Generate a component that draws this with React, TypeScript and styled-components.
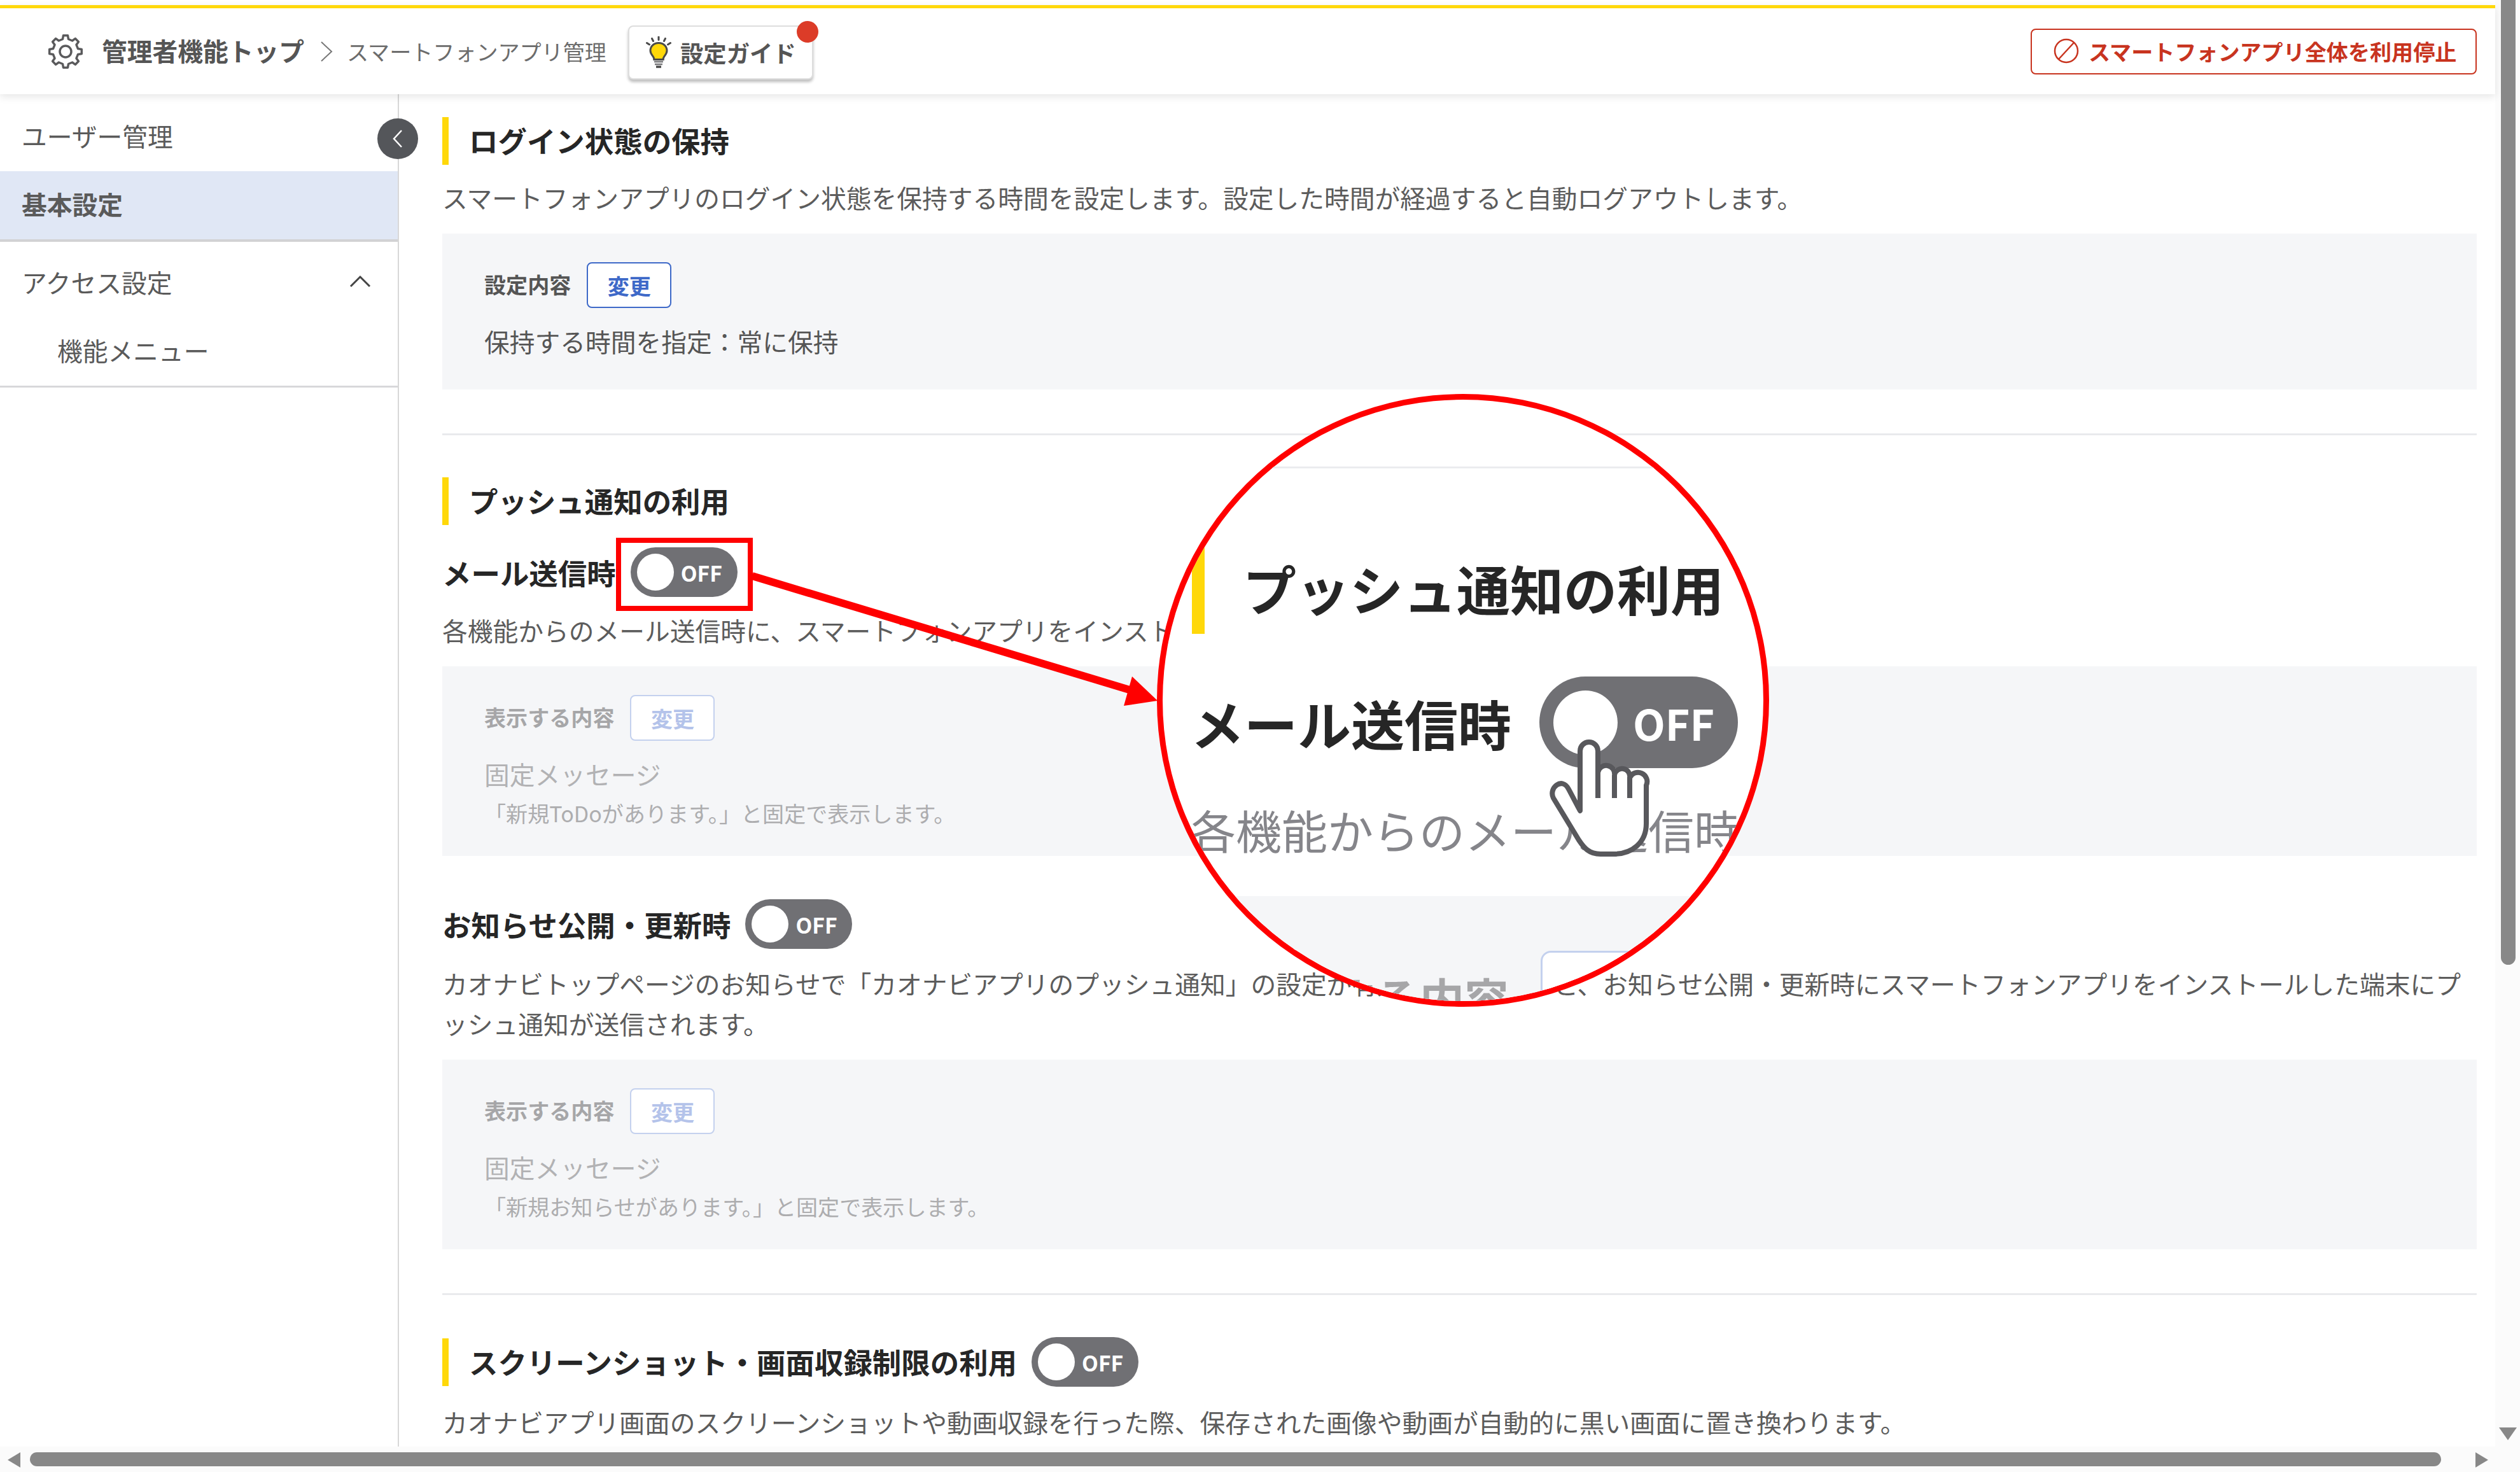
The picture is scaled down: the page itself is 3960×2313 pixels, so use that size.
import React from "react";
import styled, { createGlobalStyle } from "styled-components";

const GlobalStyle = createGlobalStyle`
  html, body {
    margin: 0;
    padding: 0;
    background: #ffffff;
  }
  body {
    width: 3960px;
    height: 2313px;
    overflow: hidden;
    font-family: "Noto Sans CJK JP", "Noto Sans", sans-serif;
    color: #555555;
  }
  * {
    box-sizing: border-box;
  }
`;

const Stage = styled.div`
  position: relative;
  display: flex;
  width: 3960px;
  height: 2313px;
  overflow: hidden;
`;

const Page = styled.div`
  display: flex;
  flex-direction: column;
  width: 3921px;
  height: 100%;
`;

const Header = styled.header`
  position: relative;
  z-index: 3;
  display: flex;
  align-items: center;
  flex: none;
  height: 140px;
  margin-top: 8px;
  padding: 0 29px 0 75px;
  background: #ffffff;
  border-top: 5px solid #ffd80a;
  box-shadow: 0 4px 12px rgba(0, 0, 0, 0.1);
`;

const HeaderTitle = styled.span`
  margin: 0 0 4px 29px;
  font-size: 39.76px;
  font-weight: 700;
  color: #555555;
`;

const Crumb = styled.span`
  margin-bottom: 2px;
  font-size: 34.08px;
  color: #6c6c6c;
`;

const CrumbArrow = styled.svg`
  width: 22px;
  height: 32px;
  margin: 0 21px 0 24px;
  fill: none;
  stroke: #777777;
  stroke-width: 2;
`;

const GuideButton = styled.button`
  position: relative;
  display: flex;
  align-items: center;
  gap: 14px;
  width: 291px;
  height: 85px;
  margin: 4px 0 0 34px;
  padding: 0 0 2px 26px;
  background: #ffffff;
  border: 2px solid #dddddd;
  border-radius: 8px;
  box-shadow: 0 4px 4px rgba(0, 0, 0, 0.25);
  font-family: inherit;
  font-size: 36.4px;
  font-weight: 700;
  color: #555555;
  white-space: nowrap;
`;

const GuideDot = styled.span`
  position: absolute;
  top: -9px;
  right: -10px;
  width: 34px;
  height: 34px;
  border-radius: 50%;
  background: #dc3c28;
`;

const StopButton = styled.button`
  display: flex;
  align-items: center;
  gap: 15px;
  width: 701px;
  height: 72px;
  margin-left: auto;
  padding: 0 0 2px 34px;
  background: #ffffff;
  border: 2px solid #c8341f;
  border-radius: 8px;
  font-family: inherit;
  font-size: 34.08px;
  font-weight: 700;
  color: #c8341f;
  white-space: nowrap;
`;

const Body = styled.div`
  display: flex;
  flex: 1;
  min-height: 0;
`;

const Sidebar = styled.nav`
  position: relative;
  z-index: 2;
  flex: none;
  width: 627px;
  padding-top: 14px;
  border-right: 2px solid #d8d8d8;
`;

const CollapseButton = styled.button`
  position: absolute;
  top: 38px;
  right: -32px;
  display: flex;
  align-items: center;
  justify-content: center;
  width: 64px;
  height: 64px;
  padding: 0;
  border: none;
  border-radius: 50%;
  background: #54565a;
`;

const NavItem = styled.div<{ $active?: boolean; $child?: boolean }>`
  display: flex;
  align-items: center;
  justify-content: space-between;
  height: 107px;
  padding: 0 42px 7px ${(p) => (p.$child ? "90px" : "34px")};
  font-size: 39.76px;
  font-weight: ${(p) => (p.$active ? 700 : 400)};
  color: #5a5a5a;
  background: ${(p) => (p.$active ? "#e0e7f5" : "transparent")};
`;

const NavGroup = styled.div`
  padding-top: 12px;
  border-top: 4px solid #d2d2d4;
  border-bottom: 3px solid #d8d8da;
`;

const Main = styled.main`
  flex: 1;
  min-width: 0;
  padding: 36px 29px 0 68px;
  overflow: hidden;
`;

const SectionRow = styled.div`
  display: flex;
  align-items: center;
  gap: 23px;
`;

const SectionTitle = styled.h2`
  display: flex;
  align-items: center;
  height: 75px;
  margin: 0;
  padding: 0 0 3px 32px;
  border-left: 10px solid #ffd80a;
  font-size: 45.44px;
  font-weight: 700;
  color: #262626;
  white-space: nowrap;
`;

const SubRow = styled.div<{ $top: number }>`
  display: flex;
  align-items: center;
  gap: 23px;
  margin-top: ${(p) => p.$top}px;
`;

const SubTitle = styled.h3`
  margin: 0;
  font-size: 45.44px;
  font-weight: 700;
  color: #262626;
  white-space: nowrap;
`;

const Desc = styled.p<{ $top?: number }>`
  margin: ${(p) => p.$top ?? 20}px 0 0;
  font-size: 39.76px;
  line-height: 63px;
  color: #5c5c5c;
  white-space: nowrap;
`;

const Panel = styled.div<{ $bottom?: number }>`
  margin-top: 26px;
  padding: 45px 66px ${(p) => p.$bottom ?? 41}px;
  background: #f5f6f8;
`;

const PanelHead = styled.div`
  display: flex;
  align-items: center;
  gap: 25px;
`;

const PanelLabel = styled.span<{ $muted?: boolean }>`
  margin-bottom: 4px;
  font-size: 34.08px;
  font-weight: 700;
  color: ${(p) => (p.$muted ? "#a6a6a8" : "#555555")};
`;

const ChangeButton = styled.button<{ $muted?: boolean }>`
  width: 133px;
  height: 72px;
  padding: 0;
  background: #ffffff;
  border: 2px solid ${(p) => (p.$muted ? "#c4d1ee" : "#3e69c8")};
  border-radius: 8px;
  font-family: inherit;
  font-size: 34.08px;
  font-weight: 700;
  color: ${(p) => (p.$muted ? "#b4c3ea" : "#3e69c8")};
`;

const PanelValue = styled.p<{ $muted?: boolean }>`
  margin: 20px 0 0;
  font-size: 39.76px;
  line-height: 63px;
  color: ${(p) => (p.$muted ? "#b2b2b4" : "#555555")};
`;

const PanelNote = styled.p`
  margin: 3px 0 0;
  font-size: 34.08px;
  line-height: 54px;
  color: #adadaf;
`;

const Rule = styled.hr`
  height: 3px;
  margin: 69px 0 66px;
  border: none;
  background: #e9eaed;
`;

const Track = styled.button<{ $w: number; $h: number; $pad: number }>`
  display: flex;
  align-items: center;
  flex: none;
  width: ${(p) => p.$w}px;
  height: ${(p) => p.$h}px;
  padding: 0 0 0 ${(p) => p.$pad}px;
  border: none;
  border-radius: ${(p) => p.$h / 2}px;
  background: #707074;
  font-family: inherit;
`;

const Knob = styled.span<{ $size: number; $gap: number }>`
  flex: none;
  width: ${(p) => p.$size}px;
  height: ${(p) => p.$size}px;
  margin-right: ${(p) => p.$gap}px;
  border-radius: 50%;
  background: #ffffff;
`;

const TrackLabel = styled.span<{ $size: number }>`
  font-size: ${(p) => p.$size}px;
  font-weight: 700;
  color: #ffffff;
`;

const VBar = styled.div`
  flex: none;
  display: flex;
  flex-direction: column;
  align-items: center;
  justify-content: space-between;
  width: 39px;
  height: 100%;
  padding: 0 0 50px 1px;
  background: #fbfbfb;
`;

const VThumb = styled.div`
  width: 23px;
  height: 1516px;
  border-radius: 0 0 12px 12px;
  background: #888888;
`;

const ArrowDown = styled.div`
  width: 0;
  height: 0;
  border-left: 14px solid transparent;
  border-right: 14px solid transparent;
  border-top: 20px solid #888888;
`;

const HBar = styled.div`
  flex: none;
  display: flex;
  align-items: flex-start;
  height: 40px;
  padding: 9px 12px 0 12px;
  background: #fbfbfb;
`;

const ArrowSide = styled.div<{ $dir: "left" | "right" }>`
  flex: none;
  width: 0;
  height: 0;
  border-top: 12px solid transparent;
  border-bottom: 12px solid transparent;
  border-${(p) => p.$dir === "left" ? "right" : "left"}: 20px solid #888888;
`;

const HThumb = styled.div`
  flex: none;
  width: 3789px;
  height: 22px;
  margin: 0 54px 0 15px;
  border-radius: 11px;
  background: #888888;
`;

/* annotation layer that sits over the screenshot */
const RedFrame = styled.div`
  position: absolute;
  left: 968px;
  top: 845px;
  width: 215px;
  height: 115px;
  border: 8px solid #ff0000;
`;

const ArrowLayer = styled.svg`
  position: absolute;
  left: 1170px;
  top: 890px;
  width: 660px;
  height: 230px;
`;

const Magnifier = styled.div`
  position: absolute;
  left: 1818px;
  top: 619px;
  width: 962px;
  height: 963px;
  padding-top: 105px;
  border: 9px solid #ff0000;
  border-radius: 50%;
  background: #ffffff;
  overflow: hidden;
`;

const LensRule = styled.div`
  height: 3px;
  background: #ebecef;
`;

const LensTitle = styled.div`
  display: flex;
  align-items: center;
  height: 158px;
  margin: 102px 0 0 46px;
  padding: 12px 0 0 60px;
  border-left: 20px solid #ffd80a;
  font-size: 84px;
  font-weight: 700;
  color: #262626;
  white-space: nowrap;
`;

const LensRow = styled.div`
  display: flex;
  align-items: center;
  gap: 44px;
  margin: 67px 0 0 44px;
  font-size: 84px;
  font-weight: 700;
  color: #262626;
  white-space: nowrap;
`;

const LensDesc = styled.div`
  height: 100px;
  margin: 46px 0 0 43px;
  font-size: 72px;
  line-height: 100px;
  color: #85858a;
  white-space: nowrap;
`;

const LensPanel = styled.div`
  display: flex;
  align-items: flex-start;
  gap: 50px;
  height: 400px;
  margin-top: 55px;
  padding: 86px 0 0 124px;
  background: #f5f6f8;
  font-size: 70px;
  font-weight: 700;
  color: #a6a6a8;
  white-space: nowrap;
`;

const LensLabel = styled.span`
  margin-top: 22px;
`;

const LensButton = styled.div`
  flex: none;
  width: 280px;
  height: 151px;
  background: #ffffff;
  border: 3px solid #c4d1ee;
  border-radius: 16px;
`;

const HandIcon = styled.svg`
  position: absolute;
  left: 604px;
  top: 530px;
  width: 162px;
  height: 190px;
`;

const Toggle = ({ large }: { large?: boolean }) =>
  large ? (
    <Track $w={312} $h={144} $pad={22}>
      <Knob $size={101} $gap={24} />
      <TrackLabel $size={66}>OFF</TrackLabel>
    </Track>
  ) : (
    <Track $w={168} $h={78} $pad={10}>
      <Knob $size={58} $gap={11} />
      <TrackLabel $size={33.6}>OFF</TrackLabel>
    </Track>
  );

// 8 teeth, first one pointing straight up
const gearPath = () => {
  const pts: string[] = [];
  for (let i = 0; i < 8; i++) {
    const a = (i * 45 - 90) * (Math.PI / 180);
    const step = (deg: number, r: number) => {
      const t = a + (deg * Math.PI) / 180;
      return `${(28 + r * Math.cos(t)).toFixed(1)} ${(28 + r * Math.sin(t)).toFixed(1)}`;
    };
    pts.push(step(-13, 20), step(-8, 25.500), step(8, 25.500), step(13, 20));
  }
  return "M" + pts.join("L") + "Z";
};

const GearIcon = () => (
  <svg width="56" height="56" viewBox="0 0 56 56" fill="none" stroke="#5a5a5c" strokeWidth="3.500" strokeLinejoin="round">
    <path d={gearPath()} />
    <circle cx="28" cy="28" r="9" />
  </svg>
);

const BulbIcon = () => (
  <svg width="40" height="50" viewBox="0 0 40 50" fill="none">
    <path
      d="M20 10.500c-7.800 0-13 5.500-13 12 0 4.400 2.500 6.900 4.300 9.300 1 1.400 1.500 3 1.500 4.700h14.400c0-1.700.5-3.300 1.500-4.700 1.800-2.400 4.300-4.900 4.300-9.300 0-6.500-5.200-12-13-12z"
      fill="#ffd80a"
      stroke="#4a4a4a"
      strokeWidth="3"
    />
    <path d="M13 40h14M14 44h12" stroke="#77777a" strokeWidth="2.500" />
    <path d="M16 48h8" stroke="#4a4a4a" strokeWidth="3.500" />
    <path
      d="M20 1v4.500M9.500 3.500l2 4M30.500 3.500l-2 4M1.500 10.500l4 2.500M38.500 10.500l-4 2.500"
      stroke="#4a4a4a"
      strokeWidth="3"
      strokeLinecap="round"
    />
  </svg>
);

const StopIcon = () => (
  <svg width="40" height="40" viewBox="0 0 40 40" fill="none" stroke="#c8341f" strokeWidth="2.500">
    <circle cx="20" cy="20" r="18" />
    <path d="M32 7L8 33" />
  </svg>
);

const DisabledPanel = ({ note }: { note: string }) => (
  <Panel>
    <PanelHead>
      <PanelLabel $muted>表示する内容</PanelLabel>
      <ChangeButton $muted>変更</ChangeButton>
    </PanelHead>
    <PanelValue $muted>固定メッセージ</PanelValue>
    <PanelNote>{note}</PanelNote>
  </Panel>
);

export default function App() {
  return (
    <Stage>
      <GlobalStyle />
      <Page>
        <Header>
          <GearIcon />
          <HeaderTitle>管理者機能トップ</HeaderTitle>
          <CrumbArrow viewBox="0 0 22 32">
            <path d="M3 1l16 15L3 31" />
          </CrumbArrow>
          <Crumb>スマートフォンアプリ管理</Crumb>
          <GuideButton>
            <BulbIcon />
            設定ガイド
            <GuideDot />
          </GuideButton>
          <StopButton>
            <StopIcon />
            スマートフォンアプリ全体を利用停止
          </StopButton>
        </Header>

        <Body>
          <Sidebar>
            <NavItem>ユーザー管理</NavItem>
            <NavItem $active>基本設定</NavItem>
            <NavGroup>
              <NavItem>
                アクセス設定
                <svg width="34" height="20" viewBox="0 0 34 20" fill="none" stroke="#444444" strokeWidth="3">
                  <path d="M2 18L17 3l15 15" />
                </svg>
              </NavItem>
              <NavItem $child>機能メニュー</NavItem>
            </NavGroup>
            <CollapseButton>
              <svg width="20" height="32" viewBox="0 0 20 32" fill="none" stroke="#ffffff" strokeWidth="2.500">
                <path d="M16 3L4 16l12 13" />
              </svg>
            </CollapseButton>
          </Sidebar>

          <Main>
            <SectionTitle>ログイン状態の保持</SectionTitle>
            <Desc $top={19}>
              スマートフォンアプリのログイン状態を保持する時間を設定します。設定した時間が経過すると自動ログアウトします。
            </Desc>
            <Panel $bottom={45}>
              <PanelHead>
                <PanelLabel>設定内容</PanelLabel>
                <ChangeButton>変更</ChangeButton>
              </PanelHead>
              <PanelValue>保持する時間を指定：常に保持</PanelValue>
            </Panel>

            <Rule />

            <SectionTitle>プッシュ通知の利用</SectionTitle>
            <SubRow $top={35}>
              <SubTitle>メール送信時</SubTitle>
              <Toggle />
            </SubRow>
            <Desc>
              各機能からのメール送信時に、スマートフォンアプリをインストールした端末にプッシュ通知が送信されます。
            </Desc>
            <DisabledPanel note="「新規ToDoがあります。」と固定で表示します。" />

            <SubRow $top={68}>
              <SubTitle>お知らせ公開・更新時</SubTitle>
              <Toggle />
            </SubRow>
            <Desc $top={22}>
              カオナビトップページのお知らせで「カオナビアプリのプッシュ通知」の設定が有効になっていると、お知らせ公開・更新時にスマートフォンアプリをインストールした端末にプ
              <br />
              ッシュ通知が送信されます。
            </Desc>
            <DisabledPanel note="「新規お知らせがあります。」と固定で表示します。" />

            <Rule />

            <SectionRow>
              <SectionTitle>スクリーンショット・画面収録制限の利用</SectionTitle>
              <Toggle />
            </SectionRow>
            <Desc $top={23}>
              カオナビアプリ画面のスクリーンショットや動画収録を行った際、保存された画像や動画が自動的に黒い画面に置き換わります。
            </Desc>
          </Main>
        </Body>

        <HBar>
          <ArrowSide $dir="left" />
          <HThumb />
          <ArrowSide $dir="right" />
        </HBar>
      </Page>

      <VBar>
        <VThumb />
        <ArrowDown />
      </VBar>

      <RedFrame />
      <ArrowLayer viewBox="0 0 660 230">
        <path d="M12 15L612 196" stroke="#ff0000" strokeWidth="12" fill="none" />
        <path d="M609 173L649 211L596 219Z" fill="#ff0000" />
      </ArrowLayer>

      <Magnifier>
        <LensRule />
        <LensTitle>プッシュ通知の利用</LensTitle>
        <LensRow>
          メール送信時
          <Toggle large />
        </LensRow>
        <LensDesc>各機能からのメール送信時に</LensDesc>
        <LensPanel>
          <LensLabel>表示する内容</LensLabel>
          <LensButton />
        </LensPanel>
        <HandIcon viewBox="-4 -4 162 190">
          <path
            d="M48 112L48 18A14 14 0 0 1 76 18L76 52A13 13 0 0 1 102 56A12 12 0 0 1 126 60A13 13 0 0 1 152 72L152 132C152 162 130 180 100 180L80 180C62 180 54 170 46 158L6 92C-2 76 20 58 30 78Z"
            fill="#ffffff"
            stroke="#58585c"
            strokeWidth="8"
            strokeLinejoin="round"
          />
          <path d="M76 50V92M102 56V92M126 60V92" stroke="#58585c" strokeWidth="8" fill="none" />
        </HandIcon>
      </Magnifier>
    </Stage>
  );
}
